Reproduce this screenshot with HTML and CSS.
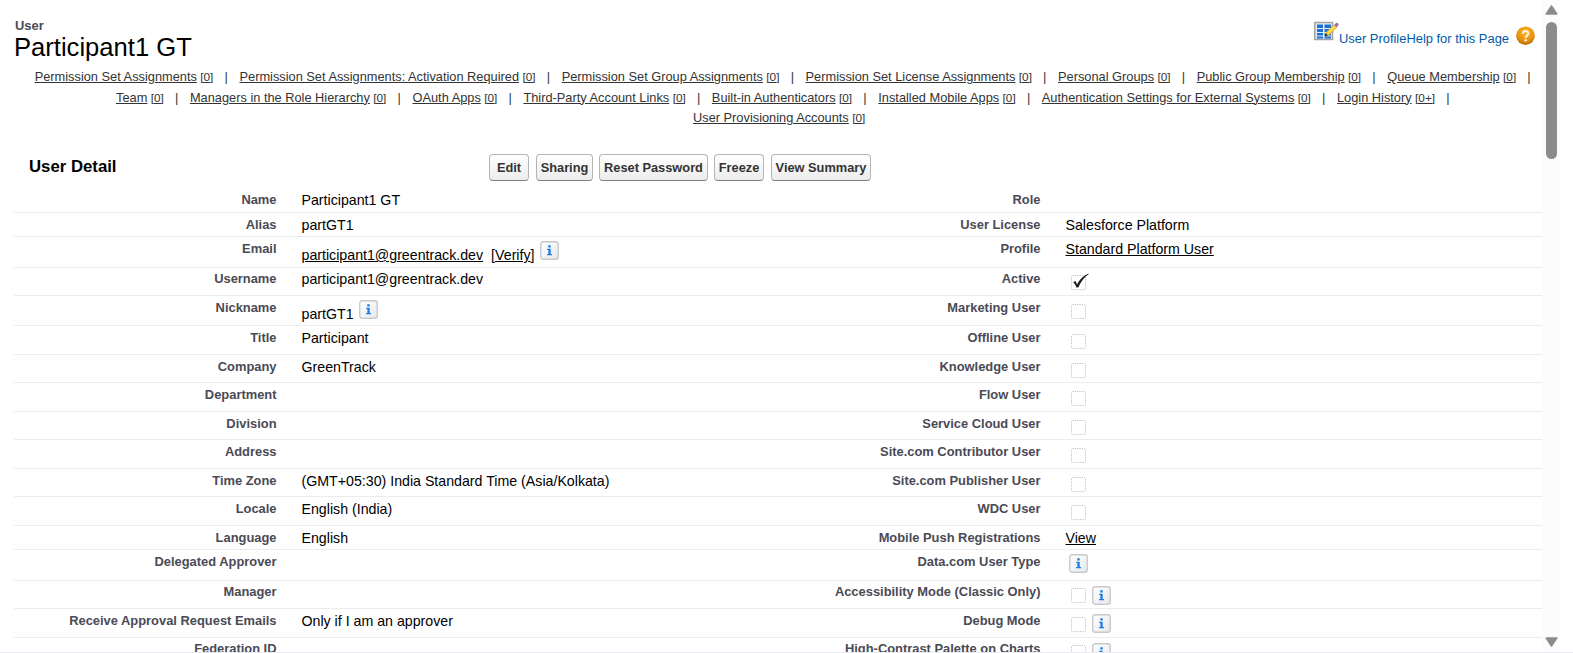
FILE: index.html
```html
<!DOCTYPE html>
<html lang="en">
<head>
<meta charset="utf-8">
<title>User: Participant1 GT</title>
<link rel="stylesheet" href="styles.css">
</head>
<body>
<svg class="defs" width="0" height="0">
  <defs>
    <linearGradient id="infoBg" x1="0" y1="0" x2="1" y2="1"><stop offset="0" stop-color="#fff"/><stop offset="1" stop-color="#e6e8ec"/></linearGradient>
    <radialGradient id="helpBg" cx=".5" cy=".3" r=".7"><stop offset="0" stop-color="#fbb62e"/><stop offset=".65" stop-color="#ea920c"/><stop offset="1" stop-color="#b86a08"/></radialGradient>
  </defs>
  <symbol id="info" viewBox="0 0 19 19">
    <rect x=".75" y=".75" width="17.5" height="17.5" rx="2.5" fill="url(#infoBg)" stroke="#c8c9cb" stroke-width="1.4"/>
    <path d="M8.3 4.3h2.4v2.1H8.3zM7.2 7.7h3.5v5.3h1.3v1.2H7.1V13h1.3V8.900H7.2z" fill="#1b7be0"/>
  </symbol>
  <symbol id="box" viewBox="0 0 20 18">
    <rect x="1.500" y="2.500" width="14" height="14" rx="1" fill="#fff" stroke="#c2c2c2" stroke-width="1" stroke-dasharray="1.2 1.1"/>
  </symbol>
  <symbol id="checked" viewBox="0 0 20 18">
    <rect x="1.500" y="2.500" width="14" height="14" rx="1" fill="#fff" stroke="#c2c2c2" stroke-width="1" stroke-dasharray="1.2 1.1"/>
    <path d="M3.200 9.200l2.200-1.100c.8 1.200 1.200 2.100 1.600 3.400C9.600 6.400 13 2.600 18.600.4l.2.6C14.200 4.100 11 8.400 8.300 14.600H6.600C5.600 12.200 4.600 10.500 3.200 9.200z" fill="#1c1c1c"/>
  </symbol>
</svg>
<div class="window">
  <main class="page">
    <header class="head">
      <div class="titles">
        <div class="type">User</div>
        <h1 class="name">Participant1 GT</h1>
      </div>
      <div class="links">
        <svg class="edit-icon" width="25" height="21" viewBox="0 0 25 21">
          <rect x=".8" y="1.500" width="17.700" height="17" fill="#e3eefb" stroke="#a2a2a2" stroke-width="1.500"/>
          <path d="M3 3.500h6v3.500H3zM10.500 3.500h6.500V7h-6.500zM3 8h6v3H3zM10.500 8h6.500v3h-6.500zM3 12h6v2.500H3zM10.500 12h6.500v2.500h-6.500zM3 15.500h6v2H3zM10.500 15.500h6.500v2h-6.500z" fill="#1b70d2"/>
          <path d="M11 15l1.400-4L20 4l2.600 2.400-7.600 7.600z" fill="#f9cd2b" stroke="#e39a1d" stroke-width=".6"/>
          <path d="M13.700 12l7.500-7" stroke="#fff08a" stroke-width="1"/>
          <path d="M20 4l2-2c1.500-1 3.400.9 2.400 2.300l-1.800 2.100z" fill="#a9719d"/>
          <path d="M10.600 15.500l1.100-3.200 2.200 2.100z" fill="#222"/>
        </svg>
        <a>User Profile</a><a>Help for this Page</a>
        <svg class="help-icon" width="19" height="20" viewBox="0 0 19 20">
          <circle cx="9.500" cy="9.700" r="9.300" fill="url(#helpBg)"/>
          <path d="M6.700 7.700c.1-3.600 5.700-3.500 5.700-.3 0 2-2.700 2.200-2.700 4.500" fill="none" stroke="#fff3d8" stroke-width="2"/>
          <circle cx="9.700" cy="14.300" r="1.250" fill="#fff3d8"/>
        </svg>
      </div>
    </header>

    <nav class="related">
      <div class="line first"><a>Permission Set Assignments</a><b>[0]</b><i>|</i><a>Permission Set Assignments: Activation Required</a><b>[0]</b><i>|</i><a>Permission Set Group Assignments</a><b>[0]</b><i>|</i><a>Permission Set License Assignments</a><b>[0]</b><i>|</i><a>Personal Groups</a><b>[0]</b><i>|</i><a>Public Group Membership</a><b>[0]</b><i>|</i><a>Queue Membership</a><b>[0]</b><i>|</i></div>
      <div class="line second"><a>Team</a><b>[0]</b><i>|</i><a>Managers in the Role Hierarchy</a><b>[0]</b><i>|</i><a>OAuth Apps</a><b>[0]</b><i>|</i><a>Third-Party Account Links</a><b>[0]</b><i>|</i><a>Built-in Authenticators</a><b>[0]</b><i>|</i><a>Installed Mobile Apps</a><b>[0]</b><i>|</i><a>Authentication Settings for External Systems</a><b>[0]</b><i>|</i><a>Login History</a><b>[0+]</b><i>|</i></div>
      <div class="line third"><a>User Provisioning Accounts</a><b>[0]</b></div>
    </nav>

    <section class="detail">
      <div class="bar">
        <h2>User Detail</h2>
        <div class="buttons"><button class="w-edit">Edit</button><button class="w-share">Sharing</button><button class="w-reset">Reset Password</button><button class="w-freeze">Freeze</button><button class="w-view">View Summary</button></div>
      </div>
      <div class="rows">
        <div class="row h25"><label>Name</label><span>Participant1 GT</span><label>Role</label><span></span></div>
        <div class="row h24"><label>Alias</label><span>partGT1</span><label>User License</label><span>Salesforce Platform</span></div>
        <div class="row h31"><label>Email</label><span class="with-info"><a>participant1@greentrack.dev</a><em>[<a>Verify</a>]</em><svg class="info"><use href="#info"/></svg></span><label>Profile</label><span><a>Standard Platform User</a></span></div>
        <div class="row h28 tight"><label>Username</label><span>participant1@greentrack.dev</span><label>Active</label><span class="icons"><svg class="check"><use href="#checked"/></svg></span></div>
        <div class="row h30"><label>Nickname</label><span class="with-info">partGT1<svg class="info"><use href="#info"/></svg></span><label>Marketing User</label><span class="icons"><svg class="check"><use href="#box"/></svg></span></div>
        <div class="row h29"><label>Title</label><span>Participant</span><label>Offline User</label><span class="icons"><svg class="check"><use href="#box"/></svg></span></div>
        <div class="row h28"><label>Company</label><span>GreenTrack</span><label>Knowledge User</label><span class="icons"><svg class="check"><use href="#box"/></svg></span></div>
        <div class="row h29"><label>Department</label><span></span><label>Flow User</label><span class="icons"><svg class="check"><use href="#box"/></svg></span></div>
        <div class="row h28"><label>Division</label><span></span><label>Service Cloud User</label><span class="icons"><svg class="check"><use href="#box"/></svg></span></div>
        <div class="row h29"><label>Address</label><span></span><label>Site.com Contributor User</label><span class="icons"><svg class="check"><use href="#box"/></svg></span></div>
        <div class="row h28"><label>Time Zone</label><span>(GMT+05:30) India Standard Time (Asia/Kolkata)</span><label>Site.com Publisher User</label><span class="icons"><svg class="check"><use href="#box"/></svg></span></div>
        <div class="row h29"><label>Locale</label><span>English (India)</span><label>WDC User</label><span class="icons"><svg class="check"><use href="#box"/></svg></span></div>
        <div class="row h24"><label>Language</label><span>English</span><label>Mobile Push Registrations</label><span><a>View</a></span></div>
        <div class="row h31"><label>Delegated Approver</label><span></span><label>Data.com User Type</label><span class="icons"><svg class="info solo"><use href="#info"/></svg></span></div>
        <div class="row h28 tight"><label>Manager</label><span></span><label>Accessibility Mode (Classic Only)</label><span class="icons"><svg class="check"><use href="#box"/></svg><svg class="info"><use href="#info"/></svg></span></div>
        <div class="row h29"><label>Receive Approval Request Emails</label><span>Only if I am an approver</span><label>Debug Mode</label><span class="icons"><svg class="check"><use href="#box"/></svg><svg class="info"><use href="#info"/></svg></span></div>
        <div class="row h29 tight"><label>Federation ID</label><span></span><label>High-Contrast Palette on Charts</label><span class="icons"><svg class="check"><use href="#box"/></svg><svg class="info"><use href="#info"/></svg></span></div>
      </div>
    </section>
  </main>
  <aside class="scroll">
    <svg width="13" height="10" viewBox="0 0 13 10"><path d="M6.500 1l5.300 8H1.200z" fill="#8b8b8b" stroke="#8b8b8b" stroke-width="1.500" stroke-linejoin="round"/></svg>
    <div class="thumb"></div>
    <svg class="down" width="13" height="10" viewBox="0 0 13 10"><path d="M6.500 9l5.300-8H1.200z" fill="#8b8b8b" stroke="#8b8b8b" stroke-width="1.500" stroke-linejoin="round"/></svg>
  </aside>
</div>
</body>
</html>
```

FILE: styles.css
```css
* { box-sizing: border-box; }
body { margin: 0; background: #fff; color: #000; font-family: "Liberation Sans", Arial, sans-serif; }
.defs { display: block; height: 0; }
.window { display: flex; height: 653px; overflow: hidden; border-bottom: 1px solid #e9ebee; }
.page { width: 1542px; height: 652px; padding-left: 14px; overflow: hidden; }

.head { display: flex; justify-content: space-between; height: 66px; padding-top: 17px; }
.type { padding-left: 1px; font-size: 12.9px; font-weight: bold; line-height: 17px; color: #4a4a56; }
.name { margin: 0; font-size: 25.6px; font-weight: normal; line-height: 26px; }
.links { display: flex; padding-right: 7px; font-size: 12.920px; line-height: 17px; color: #015ba7; }
.links a { padding-top: 13px; }
.edit-icon { margin-top: 4px; }
.help-icon { margin: 9px 0 0 7px; }

.related { height: 72px; padding-top: 1px; color: #333; font-size: 12.8px; }
.line { display: flex; height: 20.5px; line-height: 20px; white-space: nowrap; }
.line a, .line b { text-decoration: underline; }
.line b { font-size: 11.8px; font-weight: normal; margin-left: 3.4px; }
.line i { font-style: normal; margin: 0 11.6px 0 11.2px; }
.first { padding-left: 20.7px; }
.second { padding-left: 102px; }
.third { padding-left: 679px; }

.bar { display: grid; grid-template-columns: 475px 1fr; height: 49px; padding-top: 16px; }
.bar h2 { margin: 0; padding-left: 15px; font-size: 16.750px; line-height: 25px; }
.buttons { display: flex; }
.buttons button { height: 27px; padding: 0; border: 1px solid #b5b5b5; border-bottom-color: #7f7f7f; border-radius: 4px; background: linear-gradient(#fff, #ececec); color: #333; font: bold 12.8px/24px "Liberation Sans", Arial, sans-serif; white-space: nowrap; }
.w-edit { width: 40px; margin-right: 7px; }
.w-share { width: 57px; margin-right: 6px; }
.w-reset { width: 109px; margin-right: 6px; }
.w-freeze { width: 50px; margin-right: 7px; }
.w-view { width: 100px; }

.row { display: grid; grid-template-columns: 262.500px 476.500px 287.500px 1fr; border-bottom: 1px solid #ececec; line-height: 16px; }
.row label { padding-top: 4px; text-align: right; font-size: 12.9px; font-weight: bold; color: #4a4a56; }
.row > span { padding: 4px 0 0 25px; font-size: 14.2px; white-space: nowrap; }
.row a { text-decoration: underline; }
.row em { font-style: normal; margin-left: 8px; }
.row > .with-info { display: flex; padding-top: 4px; line-height: 28px; }
.row > .icons { display: flex; padding: 6px 0 0 29.500px; }
.tight label, .tight > span { padding-top: 3px; }
.row.tight > .icons { padding-top: 5px; }
.info { width: 19px; height: 19px; margin-left: 5px; flex: none; }
.check { width: 20px; height: 18px; flex: none; }
.icons .info { margin: -1px 0 0 2px; }
.tight .icons .info { margin-top: 0; }
.icons .solo { margin: -2px 0 0 -1px; }
.h24 { height: 24px; }
.h25 { height: 26px; }
.h25 label, .h25 > span { padding-top: 5px; }
.h28 { height: 28px; }
.h29 { height: 29px; }
.h30 { height: 30px; }
.h31 { height: 31px; }

.scroll { display: flex; flex-direction: column; align-items: center; width: 18px; height: 652px; padding: 5px 0 5px; background: #fcfcfc; }
.thumb { width: 11px; height: 137px; margin-top: 7px; border-radius: 6px; background: #8b8b8b; }
.down { margin-top: auto; }
```
